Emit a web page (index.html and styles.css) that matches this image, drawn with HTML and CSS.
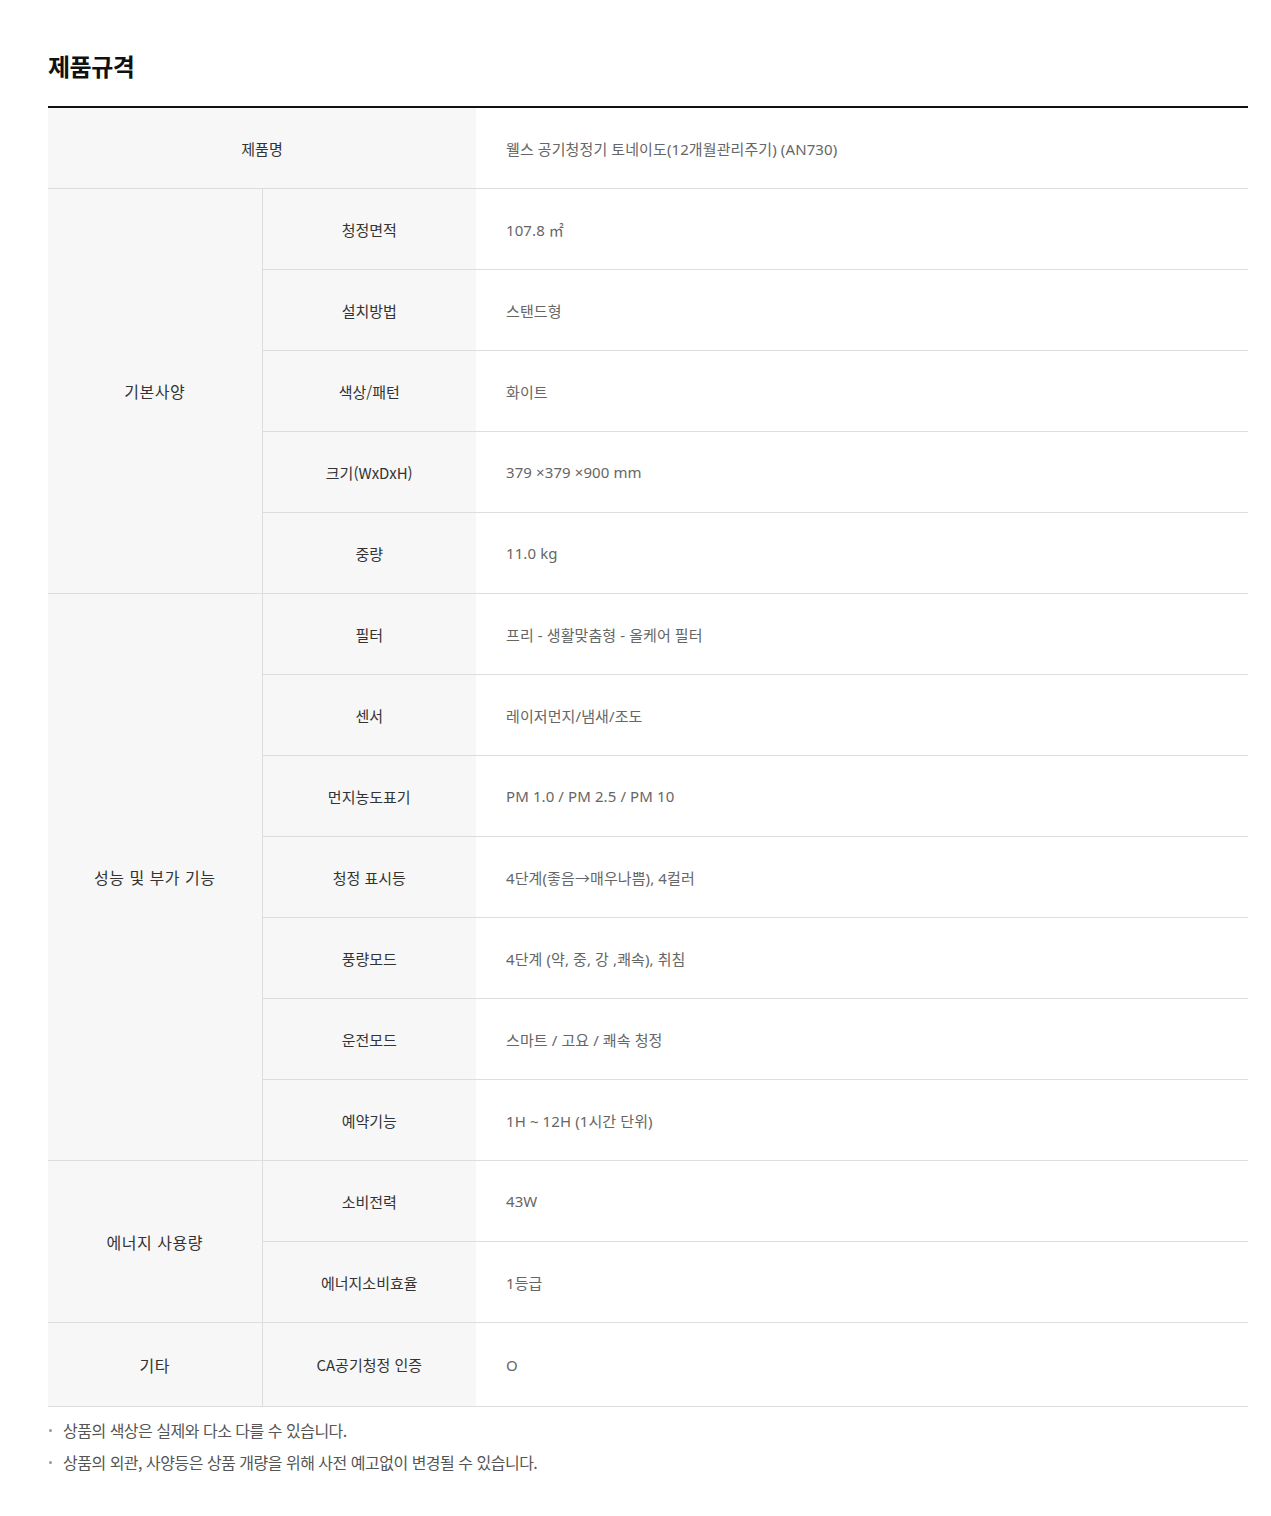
FILE: index.html
```html
<!DOCTYPE html>
<html lang="ko">
<head>
<meta charset="utf-8">
<title>제품규격</title>
<link rel="stylesheet" href="styles.css">
</head>
<body>
<div class="wrap">
  <h2 class="title">제품규격</h2>
  <table class="spec">
    <colgroup><col class="c1"><col class="c2"><col></colgroup>
    <tbody>
      <tr><th colspan="2" class="sub">제품명</th><td>웰스 공기청정기 토네이도(12개월관리주기) (AN730)</td></tr>
      <tr><th rowspan="5" class="grp">기본사양</th><th class="sub">청정면적</th><td>107.8 ㎡</td></tr>
      <tr><th class="sub">설치방법</th><td>스탠드형</td></tr>
      <tr><th class="sub">색상/패턴</th><td>화이트</td></tr>
      <tr><th class="sub">크기(WxDxH)</th><td>379 ×379 ×900 mm</td></tr>
      <tr><th class="sub">중량</th><td>11.0 kg</td></tr>
      <tr><th rowspan="7" class="grp">성능 및 부가 기능</th><th class="sub">필터</th><td>프리 - 생활맞춤형 - 올케어 필터</td></tr>
      <tr><th class="sub">센서</th><td>레이저먼지/냄새/조도</td></tr>
      <tr><th class="sub">먼지농도표기</th><td>PM 1.0 / PM 2.5 / PM 10</td></tr>
      <tr><th class="sub">청정 표시등</th><td>4단계(좋음→매우나쁨), 4컬러</td></tr>
      <tr><th class="sub">풍량모드</th><td>4단계 (약, 중, 강 ,쾌속), 취침</td></tr>
      <tr><th class="sub">운전모드</th><td>스마트 / 고요 / 쾌속 청정</td></tr>
      <tr><th class="sub">예약기능</th><td>1H ~ 12H (1시간 단위)</td></tr>
      <tr><th rowspan="2" class="grp">에너지 사용량</th><th class="sub">소비전력</th><td>43W</td></tr>
      <tr><th class="sub">에너지소비효율</th><td>1등급</td></tr>
      <tr class="last"><th class="grp">기타</th><th class="sub">CA공기청정 인증</th><td>O</td></tr>
    </tbody>
  </table>
  <ul class="notes">
    <li>상품의 색상은 실제와 다소 다를 수 있습니다.</li>
    <li>상품의 외관, 사양등은 상품 개량을 위해 사전 예고없이 변경될 수 있습니다.</li>
  </ul>
</div>
</body>
</html>
```
FILE: styles.css
```css
html, body {
  margin: 0;
  padding: 0;
  background: #fff;
}
body {
  font-family: "Noto Sans CJK KR", "Noto Sans", sans-serif;
  color: #333;
}
.wrap {
  padding: 48px 23px 40px 48px;
}
.title {
  margin: 0 0 22px;
  font-size: 24px;
  line-height: 36px;
  font-weight: 700;
  color: #111;
  letter-spacing: -0.5px;
}
.spec {
  width: 1200px;
  border-collapse: collapse;
  border-top: 2px solid #111;
  table-layout: fixed;
}
.spec col.c1 { width: 214px; }
.spec col.c2 { width: 214px; }
.spec th, .spec td {
  height: 80px;
  padding: 0;
  border-bottom: 1px solid #ddd;
  font-weight: 400;
  vertical-align: middle;
}
.spec th {
  background: #f7f7f7;
  text-align: center;
  color: #333;
}
.spec th.grp {
  font-size: 16px;
  border-right: 1px solid #ddd;
  letter-spacing: 0.5px;
}
.spec th.sub {
  font-size: 15px;
  letter-spacing: 0;
}
.spec td {
  padding-left: 30px;
  font-family: "Noto Sans", "Noto Sans CJK KR", sans-serif;
  font-size: 15px;
  color: #666;
  letter-spacing: 0.1px;
}
.spec tr.last th, .spec tr.last td {
  height: 83px;
}
.notes {
  list-style: none;
  margin: 12px 0 0;
  padding: 0;
}
.notes li {
  position: relative;
  padding-left: 15px;
  font-size: 16px;
  line-height: 22px;
  color: #555;
  margin-bottom: 10px;
  letter-spacing: -0.5px;
}
.notes li::before {
  content: "";
  position: absolute;
  left: 1px;
  top: 10px;
  width: 3px;
  height: 3px;
  border-radius: 50%;
  background: #999;
}
```
